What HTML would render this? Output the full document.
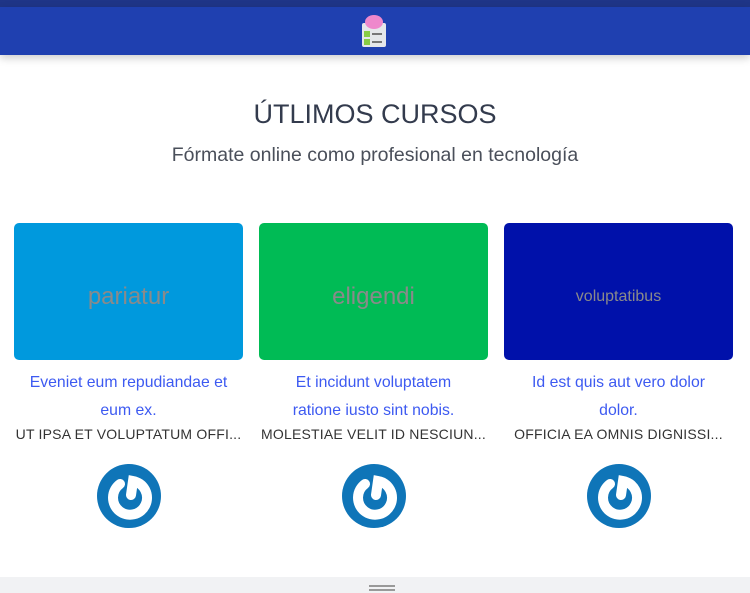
<!DOCTYPE html>
<html><head><style>
*{margin:0;padding:0;box-sizing:border-box}
body{width:750px;height:593px;background:#fff;font-family:"Liberation Sans",sans-serif;position:relative;overflow:hidden}
.top{position:absolute;left:0;top:0;width:750px;height:7px;background:#1f3587}
.nav{position:absolute;left:0;top:7px;width:750px;height:48px;background:#1f40b0;box-shadow:0 3px 8px rgba(0,0,0,.2)}
h1{position:absolute;top:99px;width:750px;text-align:center;font-weight:400;font-size:27px;color:#333b4d}
.sub{position:absolute;top:144px;width:750px;text-align:center;font-size:19.5px;color:#4a4f5a}
.card{position:absolute;top:223px;width:229px}
.img{height:137px;border-radius:5px;display:flex;align-items:center;justify-content:center;color:#8a8a8a;padding-top:10px}
.t{margin-top:9px;text-align:center;color:#3d5af1;font-size:15.8px;line-height:28px}
.s{text-align:center;color:#333;font-size:14px;white-space:nowrap;margin-top:1px;letter-spacing:.2px}
.ic{position:absolute;top:464px;width:64px;height:64px}
.foot{position:absolute;left:0;top:577px;width:750px;height:16px;background:#f1f2f4}
</style></head><body>
<div class="top"></div>
<div class="nav">
<svg style="position:absolute;left:360px;top:6px" width="28" height="36" viewBox="0 0 28 36">
<rect x="2" y="10" width="24" height="24" rx="2" fill="#e5e7ea"/>
<ellipse cx="14" cy="9" rx="9" ry="7" fill="#ee88cc"/>
<rect x="4" y="18" width="6" height="6" fill="#88cc44"/><rect x="4" y="26" width="6" height="6" fill="#88cc44"/>
<rect x="12" y="20" width="10" height="2" fill="#777"/><rect x="12" y="28" width="10" height="2" fill="#777"/>
</svg></div>
<h1>ÚTLIMOS CURSOS</h1>
<div class="sub">Fórmate online como profesional en tecnología</div>

<div class="card" style="left:14px"><div class="img" style="background:#0099dd;font-size:24px">pariatur</div>
<div class="t">Eveniet eum repudiandae et<br>eum ex.</div><div class="s">UT IPSA ET VOLUPTATUM OFFI...</div></div>
<div class="card" style="left:259px"><div class="img" style="background:#00bb55;font-size:24px">eligendi</div>
<div class="t">Et incidunt voluptatem<br>ratione iusto sint nobis.</div><div class="s">MOLESTIAE VELIT ID NESCIUN...</div></div>
<div class="card" style="left:504px"><div class="img" style="background:#0011aa;font-size:16px">voluptatibus</div>
<div class="t">Id est quis aut vero dolor<br>dolor.</div><div class="s">OFFICIA EA OMNIS DIGNISSI...</div></div>

<svg class="ic" style="left:97px" viewBox="0 0 64 64"><circle cx="32" cy="32" r="32" fill="#0f75b8"/><path d="M23 20 A17 17 0 1 0 36 17 L34 31" fill="none" stroke="#fff" stroke-width="10" stroke-linecap="round"/></svg>
<svg class="ic" style="left:342px" viewBox="0 0 64 64"><circle cx="32" cy="32" r="32" fill="#0f75b8"/><path d="M23 20 A17 17 0 1 0 36 17 L34 31" fill="none" stroke="#fff" stroke-width="10" stroke-linecap="round"/></svg>
<svg class="ic" style="left:587px" viewBox="0 0 64 64"><circle cx="32" cy="32" r="32" fill="#0f75b8"/><path d="M23 20 A17 17 0 1 0 36 17 L34 31" fill="none" stroke="#fff" stroke-width="10" stroke-linecap="round"/></svg>

<div class="foot"><div style="position:absolute;left:369px;top:8px;width:26px;height:2px;background:#999"></div><div style="position:absolute;left:369px;top:12px;width:26px;height:2px;background:#999"></div></div>
</body></html>
